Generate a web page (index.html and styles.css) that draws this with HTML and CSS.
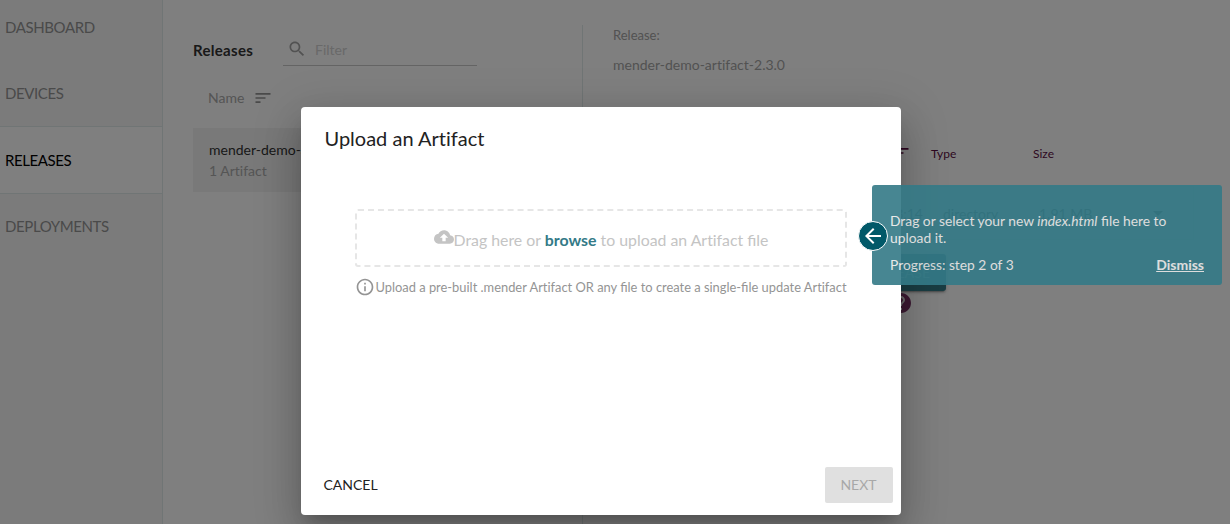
FILE: index.html
```html
<!DOCTYPE html>
<html lang="en">
<head>
<meta charset="utf-8">
<title>Releases</title>
<link rel="stylesheet" href="styles.css">
</head>
<body>
<div class="app">
  <nav class="sidebar">
    <a class="nav-item first">DASHBOARD</a>
    <a class="nav-item">DEVICES</a>
    <a class="nav-item active">RELEASES</a>
    <a class="nav-item">DEPLOYMENTS</a>
  </nav>
  <section class="list">
    <header class="list-head">
      <h1>Releases</h1>
      <div class="filter">
        <svg width="20" height="20" viewBox="0 0 24 24"><path d="M15.5 14h-.79l-.28-.27C15.41 12.59 16 11.11 16 9.5 16 5.91 13.09 3 9.5 3S3 5.91 3 9.5 5.91 16 9.5 16c1.61 0 3.09-.59 4.23-1.57l.27.28v.79l5 4.99L20.49 19l-4.99-5zm-6 0C7.01 14 5 11.99 5 9.5S7.01 5 9.5 5 14 7.01 14 9.5 11.99 14 9.5 14z"/></svg>
        <span>Filter</span>
      </div>
    </header>
    <div class="sort">
      <span>Name</span>
      <svg width="20" height="20" viewBox="0 0 24 24"><path d="M3 18h6v-2H3v2zM3 6v2h18V6H3zm0 7h12v-2H3v2z"/></svg>
    </div>
    <div class="release">
      <div class="release-name">mender-demo-artifact-2.3.0</div>
      <div class="release-count">1 Artifact</div>
    </div>
  </section>
  <section class="details">
    <div class="label">Release:</div>
    <div class="value">mender-demo-artifact-2.3.0</div>
    <div class="table-head">
      <svg width="20" height="20" viewBox="0 0 24 24"><path d="M3 18h6v-2H3v2zM3 6v2h18V6H3zm0 7h12v-2H3v2z"/></svg>
      <span>Type</span>
      <span>Size</span>
    </div>
    <div class="table-row">
      <span class="modified">2020-03-17 13:14</span>
      <span>directory</span>
      <span>1.91 MB</span>
      <svg width="24" height="24" viewBox="0 0 24 24"><path d="M7 10l5 5 5-5z"/></svg>
    </div>
    <div class="actions">
      <button class="deploy">DEPLOY THIS RELEASE</button>
    </div>
    <div class="help">
      <svg width="24" height="24" viewBox="0 0 24 24"><circle cx="12" cy="12" r="9" fill="#ddd"/><path d="M12 2C6.48 2 2 6.48 2 12s4.48 10 10 10 10-4.48 10-10S17.52 2 12 2zm1 17h-2v-2h2v2zm2.07-7.75l-.9.92C13.45 12.9 13 13.5 13 15h-2v-.5c0-1.1.45-2.1 1.17-2.83l1.24-1.26c.37-.36.59-.86.59-1.41 0-1.1-.9-2-2-2s-2 .9-2 2H8c0-2.21 1.79-4 4-4s4 1.79 4 4c0 .88-.36 1.68-.93 2.25z"/></svg>
    </div>
  </section>
</div>
<div class="scrim"></div>
<div class="dialog">
  <h2>Upload an Artifact</h2>
  <div class="dialog-body">
    <div class="dropzone">
      <svg width="20" height="20" viewBox="0 0 24 24"><path d="M19.35 10.04C18.67 6.59 15.64 4 12 4 9.11 4 6.6 5.64 5.35 8.04 2.34 8.36 0 10.91 0 14c0 3.31 2.69 6 6 6h13c2.76 0 5-2.24 5-5 0-2.64-2.05-4.78-4.65-4.96zM14 13v4h-4v-4H7l5-5 5 5h-3z"/></svg>
      <p>Drag here or <b>browse</b> to upload an Artifact <span class="lig">file</span></p>
    </div>
    <div class="hint">
      <svg width="20" height="20" viewBox="0 0 24 24"><path d="M11 17h2v-6h-2v6zm1-15C6.48 2 2 6.48 2 12s4.48 10 10 10 10-4.48 10-10S17.52 2 12 2zm0 18c-4.41 0-8-3.59-8-8s3.59-8 8-8 8 3.59 8 8-3.59 8-8 8zM11 9h2V7h-2v2z"/></svg>
      <span>Upload a pre-built .mender Artifact OR any <span class="lig">file</span> to create a single-<span class="lig">file</span> update Artifact</span>
    </div>
  </div>
  <footer class="dialog-actions">
    <button class="cancel">CANCEL</button>
    <button class="next">NEXT</button>
  </footer>
</div>
<aside class="tip">
  <p>Drag or select your new <i>index.html</i> <span class="lig">file</span> here to upload it.</p>
  <div class="tip-foot"><span>Progress: step 2 of 3</span><a>Dismiss</a></div>
</aside>
<div class="tip-arrow">
  <svg width="24" height="24" viewBox="0 0 24 24"><path d="M20 11H7.83l5.59-5.59L12 4l-8 8 8 8 1.41-1.41L7.83 13H20v-2z"/></svg>
</div>
</body>
</html>
```
FILE: styles.css
```css
* { box-sizing: border-box; }
body {
  margin: 0;
  height: 524px;
  overflow: hidden;
  position: relative;
  background: #fff;
  font-family: Lato, sans-serif;
  font-size: 14px;
  font-variant-ligatures: none;
}
.lig { font-variant-ligatures: normal; }
h1, h2, p { margin: 0; }
button { border: 0; font: inherit; }
svg { display: block; flex: none; fill: currentColor; }

.app { display: flex; height: 524px; }
.sidebar {
  width: 163px;
  flex: none;
  background: #f7f7f7;
  border-right: 1px solid #e0ebeb;
}
.nav-item {
  display: flex;
  align-items: center;
  height: 66px;
  padding-left: 5px;
  font-size: 15px;
  letter-spacing: -.4px;
  color: #949494;
}
.nav-item.first { height: 60px; padding-bottom: 6px; }
.nav-item.active {
  height: 68px;
  width: 162px;
  background: #fff;
  border: solid #e0ebeb;
  border-width: 1px 0;
  color: #000;
}
.nav-item.active + .nav-item { height: 64px; }

.list { width: 419px; flex: none; padding: 34px 30px 0; }
.list-head { display: flex; height: 32px; }
h1 { width: 90px; font-size: 15px; line-height: 33px; letter-spacing: .3px; color: #333; }
.filter {
  display: flex;
  width: 194px;
  height: 32px;
  padding: 5px 0 0 4px;
  border-bottom: 1px solid #c8c8c8;
  color: #a5a5a5;
}
.filter span { margin-left: 8px; line-height: 22px; color: #d2d2d2; }
.sort {
  display: flex;
  align-items: center;
  gap: 9px;
  margin-top: 22px;
  padding-left: 15px;
  height: 20px;
  color: #aaa;
}
.sort span { margin-top: -2px; }
.sort svg { color: #949494; }
.release {
  height: 64px;
  margin-top: 20px;
  padding: 11px 16px;
  background: #f2f2f2;
  line-height: 21px;
  white-space: nowrap;
}
.release-name { color: #333; }
.release-count { color: #aaa; }

.details {
  flex: 1;
  margin-top: 25px;
  padding: 0 36px 0 30px;
  border-left: 1px solid #e0ebeb;
  color: #a5a5a5;
}
.label { font-size: 13px; line-height: 20px; }
.value { margin-top: 10px; line-height: 20px; }
.table-head {
  display: grid;
  grid-template-columns: 20px 102px 100px;
  column-gap: 0;
  align-items: center;
  margin: 68px 0 0 278px;
  height: 20px;
  font-size: 12px;
  color: #5d0f43;
}
.table-head span { margin-left: 20px; }
.table-row {
  display: grid;
  grid-template-columns: 329px 96px 107px 24px;
  align-items: center;
  margin-top: 23px;
  height: 54px;
  border: 1px solid #f4f4f4;
  color: #555;
}
.modified { padding-right: 20px; text-align: right; }
.actions { display: flex; margin-top: 14px; padding-left: 158px; }
.deploy {
  width: 175px;
  height: 37px;
  padding: 0 16px 0 0;
  border-radius: 3px;
  background: #347a87;
  color: #9cc;
  text-align: right;
  box-shadow: 0 3px 1px -2px #0003, 0 2px 2px #0002, 0 1px 5px #0002;
}
.help { display: flex; margin: 0 0 0 276px; color: #7a3566; }

.scrim { position: absolute; inset: 0; background: rgba(0, 0, 0, .5); }
.dialog {
  position: absolute;
  left: 301px;
  top: 107px;
  display: flex;
  flex-direction: column;
  width: 600px;
  height: 408px;
  border-radius: 4px;
  background: #fff;
  box-shadow: 0 11px 15px -7px rgba(0, 0, 0, .2), 0 24px 38px 3px rgba(0, 0, 0, .14), 0 9px 46px 8px rgba(0, 0, 0, .12);
}
h2 { padding: 15px 23.5px 17px; font-size: 20px; line-height: 32px; font-weight: 400; color: #222; }
.dialog-body { flex: 1; padding: 38px 54px 0; }
.dropzone {
  display: flex;
  justify-content: center;
  height: 58px;
  padding-top: 16px;
  border: 2px dashed #e6e6e6;
  border-radius: 3px;
  font-size: 15.85px;
  color: #c4c4c4;
}
.dropzone p { line-height: 25px; }
.dropzone b { color: #347a87; }
.hint {
  display: flex;
  align-items: center;
  justify-content: center;
  margin-top: 10px;
  font-size: 12.88px;
  white-space: nowrap;
  color: #949494;
}
.dialog-actions { display: flex; justify-content: space-between; padding: 0 8px 12px; }
.dialog-actions button { height: 36px; border-radius: 2px; padding: 0 1px 2px 0; }
.cancel { width: 84px; background: none; color: #222; }
.next { width: 68px; background: #e0e0e0; color: #a8a8a8; }

.tip {
  position: absolute;
  left: 872px;
  top: 185px;
  width: 350px;
  height: 100px;
  padding: 27px 18px 0;
  border-radius: 3px;
  background: #347a87;
  color: #fff;
  font-size: 13.82px;
  line-height: 17px;
  opacity: .9;
}
.tip p { width: 290px; }
.tip p, .tip-foot { color: #e8e8e8; }
.tip-foot { display: flex; justify-content: space-between; margin-top: 10px; }
.tip-foot a { font-size: 14px; font-weight: 700; text-decoration: underline; }
.tip-arrow {
  position: absolute;
  left: 858px;
  top: 221px;
  display: grid;
  place-items: center;
  width: 30px;
  height: 30px;
  border: 1px solid #fff;
  border-radius: 50%;
  background: #015969;
  color: #fff;
}
```
